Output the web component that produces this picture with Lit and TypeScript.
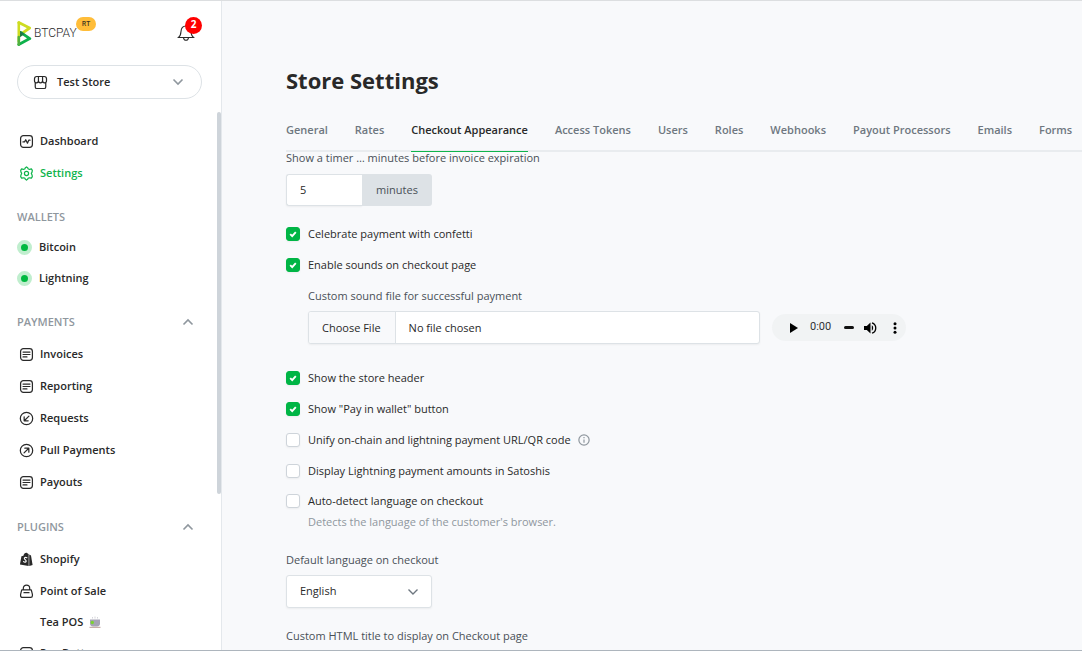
import { LitElement, html, svg, css, nothing } from "lit";
import { customElement, state } from "lit/decorators.js";
import { classMap } from "lit/directives/class-map.js";

const icons: Record<string, unknown> = {
  dashboard: svg`<rect x="1.7" y="1.7" width="12.6" height="12.6" rx="3"/><path d="M4.2 8.4h1.7l1.3-2.3 1.8 3.7 1.4-3.2h1.4"/>`,
  settings: svg`<path d="M6.6 2.1 8 .9l1.4 1.2.5 1.1 1.4.3 1.9-.4 1 1.6-.3 1.9-.8 1.2.8 1.7.3 1.8-1 1.6-1.9-.3-1.4.2-.5 1.1L8 15.1l-1.4-1.2-.5-1.1-1.4-.2-1.9.3-1-1.6.3-1.8.8-1.7-.8-1.2-.3-1.9 1-1.6 1.9.4 1.4-.3z"/><circle cx="8" cy="8" r="2.2"/>`,
  list: svg`<rect x="1.7" y="1.7" width="12.6" height="12.6" rx="3"/><path d="M4.3 5.4h7.4M4.3 8h7.4M4.3 10.6h4.2"/>`,
  request: svg`<circle cx="8" cy="8" r="6.6"/><path d="M10.6 5.4 5.6 10.4M5.5 6.2v4.300h4.300"/>`,
  pull: svg`<circle cx="8" cy="8" r="6.6"/><path d="M5.4 10.6 10.4 5.6M6.2 5.500h4.300v4.300"/>`,
  shopify: svg`<path fill="currentColor" stroke="none" d="M2.6 4.6 4.7 4C5.2 2 6.4.7 7.9.8c.7 0 1.2.5 1.5 1.1l.9.2v12.9L1 13.3z"/><path fill="currentColor" stroke="none" d="m10.9 2.7 1.9.9 1.7 10.3-3.6 1z"/><path stroke="#fff" stroke-width="1.2" d="M8.4 6.1c-1.4-.7-2.8-.2-2.7.9.1 1.2 2.1 1.3 2 2.7-.1 1.2-1.6 1.5-2.9.6"/>`,
  pos: svg`<path d="M2.9 6.2h10.2l1.2 4.9v1.4c0 1.1-.8 1.8-1.8 1.8h-9c-1 0-1.8-.7-1.8-1.8v-1.4zM4.6 6V4.6C4.6 2.6 6 1.3 8 1.3s3.4 1.3 3.4 3.3V6M5.3 9.2h5.4"/>`,
  store: svg`<path d="M2.4 8.2v4.5c0 1 .7 1.7 1.7 1.7h7.8c1 0 1.7-.7 1.7-1.7V8.2M4 1.6h8c1.500 0 2.400 1 2.400 2.500V6c0 1.400-.9 2.300-2.100 2.300S10.200 7.400 10.200 6.200c0 1.200-.9 2.100-2.200 2.100s-2.200-.9-2.200-2.100c0 1.200-.9 2.100-2.100 2.100S1.600 7.400 1.600 6V4.100C1.600 2.600 2.500 1.600 4 1.600zM5.800 6.200V1.700M10.200 6.200V1.700"/>`,
};

const icon = (name: string) => html`<svg class="icon" viewBox="0 0 16 16" aria-hidden="true">${icons[name]}</svg>`;
const chevron = (up = false) => html`<svg class="chevron" viewBox="0 0 12 12" aria-hidden="true"><path d=${up ? "M1.5 8.5 6 4l4.5 4.5" : "M1.5 3.5 6 8l4.5-4.5"} /></svg>`;

@customElement("store-sidebar")
export class StoreSidebar extends LitElement {
  static styles = css`
    :host { display: flex; flex-direction: column; position: relative; min-height: 0; overflow: hidden; background: #fff; border-right: 1px solid #e4e8ec; }
    a { color: inherit; text-decoration: none; }
    button { font: inherit; color: inherit; background: none; border: 0; padding: 0; }
    ul { list-style: none; margin: 0; padding: 0; }
    .top { display: flex; flex: none; align-items: flex-start; justify-content: space-between; padding: 15px 20px 0 17px; height: 49px; }
    .brand { display: flex; align-items: flex-start; }
    .logo { width: 16px; height: 28px; margin-top: 3px; }
    .name { font: 300 12px/28px "Roboto", "Open Sans", sans-serif; margin: 3px 0 0 1px; }
    .tag { background: #ffbd39; color: #3c3522; border-radius: 7px; font-size: 7px; font-weight: 600; line-height: 14px; padding: 0 6px; margin: 1px 0 0 -1px; }
    .bell { position: relative; display: block; width: 24px; height: 28px; }
    .bell svg { position: absolute; left: 0; top: 7px; width: 18px; height: 19px; fill: none; stroke: #292929; stroke-width: 1.1; }
    .count { position: absolute; left: 8px; top: 1px; width: 17px; height: 17px; line-height: 15px; border-radius: 50%; background: #f00; color: #fff; font-size: 10px; font-weight: 700; text-align: center; }
    .store { display: flex; align-items: center; gap: 9px; flex: none; margin: 0 19px 0 17px; padding: 0 17px 0 15px; height: 34px; border: 1px solid #dde2e6; border-radius: 17px; font-weight: 600; }
    .store span { flex: 1; text-align: left; }
    nav { padding: 26px 27px 0 17px; font-weight: 600; }
    .item { display: flex; align-items: center; gap: 6px; height: 32px; padding-left: 2px; }
    .icon { flex: none; width: 15px; height: 15px; fill: none; stroke: currentColor; stroke-width: 1.3; stroke-linecap: round; stroke-linejoin: round; }
    .active { color: #0fb44c; }
    .head { display: flex; align-items: center; justify-content: space-between; height: 26px; margin: 15px 0 3px; color: #8f979e; }
    h2 { font-size: 11px; font-weight: 600; margin: 0; }
    .chevron { width: 12px; height: 12px; fill: none; stroke: #8f979e; stroke-width: 1.6; display: block; }
    .wallets { display: flex; flex-direction: column; gap: 3px; padding-bottom: 2px; }
    .wallets .item { height: 28px; gap: 7px; padding-left: 0; }
    .payments { padding-bottom: 1px; }
    .dot { width: 7px; height: 7px; border: 4px solid #c0eece; background: #00b940; border-radius: 50%; }
    .sub { padding-left: 23px; height: 30px; }
    .tea { width: 12px; height: 12px; }
    .thumb { position: absolute; right: 0; top: 111px; width: 4px; height: 382px; border-radius: 2px; background: #ced4da; }
  `;

  private item(name: string, label: string, active = false) {
    return html`<li><a class=${classMap({ item: true, active })} href="#">${icon(name)}<span>${label}</span></a></li>`;
  }

  private section(label: string) {
    return html`<div class="head"><h2>${label}</h2><button aria-label="Toggle ${label}">${chevron(true)}</button></div>`;
  }

  render() {
    return html`
      <div class="top">
        <a class="brand" href="#">
          <svg class="logo" viewBox="0 0 16 28" aria-hidden="true">
            <path d="m1.800 3.600 10.800 5.400-9 6.400" fill="none" stroke="#cedc21" stroke-width="2.800" stroke-linejoin="round" stroke-linecap="round"/>
            <path d="m4 13.600 8.800 6-11 5.900" fill="none" stroke="#0db14b" stroke-width="2.800" stroke-linejoin="round" stroke-linecap="round"/>
            <path d="M1.800 3.600v19" stroke="#cedc21" stroke-width="2.600" stroke-linecap="round"/>
            <path d="M1.800 18v7.400" stroke="#51b13e" stroke-width="2.600" stroke-linecap="round"/>
            <path d="M3 11.800v6.400l4.600-3.200z" fill="#1e7a44"/>
          </svg>
          <span class="name">BTCPAY</span>
          <span class="tag">RT</span>
        </a>
        <button class="bell" aria-label="Notifications">
          <svg viewBox="0 0 18 19"><path d="M1.500 14.500h15c-2-1.500-2.300-3-2.500-6C13.800 5 12 3 9 3S4.200 5 4 8.500c-.2 3-.5 4.500-2.500 6zM6.500 14.700c.2 1.700 1 2.600 2.500 2.600s2.300-.9 2.500-2.600"/></svg>
          <span class="count">2</span>
        </button>
      </div>
      <button class="store">${icon("store")}<span>Test Store</span>${chevron()}</button>
      <nav aria-label="Store">
        <ul>${this.item("dashboard", "Dashboard")}${this.item("settings", "Settings", true)}</ul>
        <div class="head"><h2>WALLETS</h2></div>
        <ul class="wallets">
          ${["Bitcoin", "Lightning"].map((w) => html`<li><a class="item" href="#"><span class="dot"></span><span>${w}</span></a></li>`)}
        </ul>
        ${this.section("PAYMENTS")}
        <ul class="payments">
          ${this.item("list", "Invoices")}${this.item("list", "Reporting")}${this.item("request", "Requests")}
          ${this.item("pull", "Pull Payments")}${this.item("list", "Payouts")}
        </ul>
        ${this.section("PLUGINS")}
        <ul>
          ${this.item("shopify", "Shopify")}${this.item("pos", "Point of Sale")}
          <li><a class="item sub" href="#"><span>Tea POS</span>
            <svg class="tea" viewBox="0 0 12 12" role="img" aria-label="tea">
              <path d="M3.500 2.500V1M6 2.500V.5M8.500 2.500V1" stroke="#d5d5da"/><path d="M1 3.500h10v4c0 2-1.200 3-3 3H4c-1.800 0-3-1-3-3z" fill="#a5a3b5"/>
              <circle cx="3.300" cy="6.500" r="1.700" fill="#7cd132"/><path d="M.5 11.300h11" stroke="#b99a96"/>
            </svg></a></li>
          ${this.item("list", "Pay Button")}
        </ul>
      </nav>
      <div class="thumb"></div>
    `;
  }
}

@customElement("audio-player")
export class AudioPlayer extends LitElement {
  static styles = css`
    :host { display: flex; align-items: center; height: 27px; border-radius: 14px; background: #f1f3f4; padding: 0 4px 0 15px; box-sizing: border-box; width: 134px; }
    button { display: block; background: none; border: 0; padding: 0; width: 14px; height: 14px; }
    svg { display: block; width: 14px; height: 14px; }
    .time { font: 11px "Roboto", sans-serif; color: #303234; padding: 0 13px 2px 9px; }
    .bar { width: 10px; height: 3px; border-radius: 2px; background: #111; margin-right: 9px; }
    .menu { margin-left: 11px; }
  `;

  render() {
    return html`
      <button aria-label="Play"><svg viewBox="0 0 14 14"><path d="M3 2v10l8-5z"/></svg></button>
      <span class="time">0:00</span>
      <span class="bar"></span>
      <button aria-label="Mute"><svg viewBox="0 0 14 14"><path d="M1 5v4h2.800L7.500 12.500v-11L3.800 5z"/><path d="M8.800 4.300c1.800.8 1.800 4.600 0 5.400z"/><path d="M9 1.800c5 1.600 5 8.800 0 10.400" fill="none" stroke="#000" stroke-width="1.300"/></svg></button>
      <button class="menu" aria-label="More options"><svg viewBox="0 0 14 14"><circle cx="7" cy="2.800" r="1.500"/><circle cx="7" cy="7" r="1.500"/><circle cx="7" cy="11.200" r="1.500"/></svg></button>
    `;
  }
}

const tabs = ["General", "Rates", "Checkout Appearance", "Access Tokens", "Users", "Roles", "Webhooks", "Payout Processors", "Emails", "Forms"];

@customElement("app-root")
export class AppRoot extends LitElement {
  @state() private current = "Checkout Appearance";

  static styles = css`
    :host { display: grid; grid-template-columns: 222px minmax(0, 1fr); grid-template-rows: minmax(0, 1fr); height: 100vh; box-sizing: border-box; overflow: hidden; background: #f8f9fb; color: #292929; font: 11px/20px "Open Sans", sans-serif; border-top: 1px solid #dcdee0; border-bottom: 1px solid #adb5bd; }
    main { padding: 63px 0 0 64px; min-width: 0; overflow: hidden; }
    h1 { font-size: 22px; line-height: 32px; font-weight: 700; margin: 0 0 24px; }
    .tabs { display: flex; gap: 27px; font-weight: 600; color: #6e7780; box-shadow: inset 0 -2px #e9ecef; white-space: nowrap; }
    .tabs a { color: inherit; text-decoration: none; height: 31px; border-bottom: 1px solid transparent; }
    .tabs .active { color: #292929; border-color: #0fb44c; }
    form { display: flex; flex-direction: column; align-items: flex-start; margin-top: -4px; }
    .label { display: block; color: #495057; margin-bottom: 5px; }
    input, select { font: inherit; color: #292929; box-sizing: border-box; }
    .group { display: flex; height: 32px; width: 146px; margin: 1px 0 18px; }
    .number { width: 76px; flex: none; border: 1px solid #dde2e6; border-right: 0; border-radius: 3px 0 0 3px; background: #fff; padding: 0 13px; box-shadow: 0 1px 2px #0000000d; outline: 0; }
    .unit { flex: 1; background: #dde2e6; color: #495057; border-radius: 0 3px 3px 0; line-height: 32px; text-align: center; }
    .check { display: flex; align-items: center; height: 20px; gap: 8px; margin-bottom: 11px; }
    .check.last { margin: -1px 0 1px; }
    .box { appearance: none; width: 14px; height: 14px; margin: 0; border: 1px solid #ced4da; border-radius: 3px; background: #fff; box-shadow: 0 1px 2px #0000000d; }
    .box:checked { border-color: #00b545; background: #00b545 url("data:image/svg+xml,%3Csvg xmlns='http://www.w3.org/2000/svg' viewBox='0 0 12 12'%3E%3Cpath d='m3.200 6.200 2 2 3.600-4' fill='none' stroke='white' stroke-width='1.900'/%3E%3C/svg%3E") center / 12px; }
    .info { width: 12px; height: 12px; fill: none; stroke: #8f979e; stroke-width: 1.400; margin-left: -1px; }
    .indent { margin-left: 22px; align-self: stretch; }
    .sound { display: flex; align-items: center; gap: 12px; margin-bottom: 24px; }
    .file { width: 452px; height: 33px; line-height: 31px; border: 1px solid #dde2e6; border-radius: 3px; background: #fff; box-shadow: 0 1px 2px #0000000d; overflow: hidden; }
    .file::file-selector-button { font: inherit; color: #292929; height: 31px; background: #f8f9fb; border: 0; border-right: 1px solid #dde2e6; padding: 0 14px 0 13px; margin: 0 13px 0 0; }
    .hint { color: #8f979e; margin-bottom: 18px; }
    .select { display: grid; align-items: center; width: 146px; margin-bottom: 18px; }
    .select > * { grid-area: 1 / 1; }
    select { appearance: none; height: 33px; width: 100%; border: 1px solid #dde2e6; border-radius: 3px; background: #fff; padding: 0 13px 1px; box-shadow: 0 1px 2px #0000000d; }
    .chevron { justify-self: end; margin-right: 13px; width: 12px; height: 12px; fill: none; stroke: #6e7780; stroke-width: 1.400; pointer-events: none; }
  `;

  private check(id: string, label: string, checked: boolean, extra: unknown = nothing, last = false) {
    return html`<div class=${classMap({ check: true, last })}><input class="box" type="checkbox" id=${id} ?checked=${checked} /><label for=${id}>${label}</label>${extra}</div>`;
  }

  render() {
    return html`
      <store-sidebar></store-sidebar>
      <main>
        <h1>Store Settings</h1>
        <nav class="tabs" aria-label="Store settings">
          ${tabs.map((t) => html`<a href="#" class=${classMap({ active: t === this.current })} @click=${() => (this.current = t)}>${t}</a>`)}
        </nav>
        <form>
          <label class="label" for="timer">Show a timer … minutes before invoice expiration</label>
          <div class="group"><input class="number" id="timer" inputmode="numeric" value="5" /><span class="unit">minutes</span></div>
          ${this.check("confetti", "Celebrate payment with confetti", true)}
          ${this.check("sounds", "Enable sounds on checkout page", true)}
          <div class="indent">
            <label class="label" for="file">Custom sound file for successful payment</label>
            <div class="sound"><input class="file" id="file" type="file" /><audio-player></audio-player></div>
          </div>
          ${this.check("header", "Show the store header", true)}
          ${this.check("pay", 'Show "Pay in wallet" button', true)}
          ${this.check("unify", "Unify on-chain and lightning payment URL/QR code", false, html`<svg class="info" viewBox="0 0 14 14"><circle cx="7" cy="7" r="6"/><path d="M7 6.300v4M7 3.500v1.500"/></svg>`)}
          ${this.check("sats", "Display Lightning payment amounts in Satoshis", false)}
          ${this.check("detect", "Auto-detect language on checkout", false, nothing, true)}
          <div class="indent hint">Detects the language of the customer's browser.</div>
          <label class="label" for="lang">Default language on checkout</label>
          <div class="select"><select id="lang"><option>English</option></select>${chevron()}</div>
          <label class="label" for="title">Custom HTML title to display on Checkout page</label>
          <input id="title" />
        </form>
      </main>
    `;
  }
}
